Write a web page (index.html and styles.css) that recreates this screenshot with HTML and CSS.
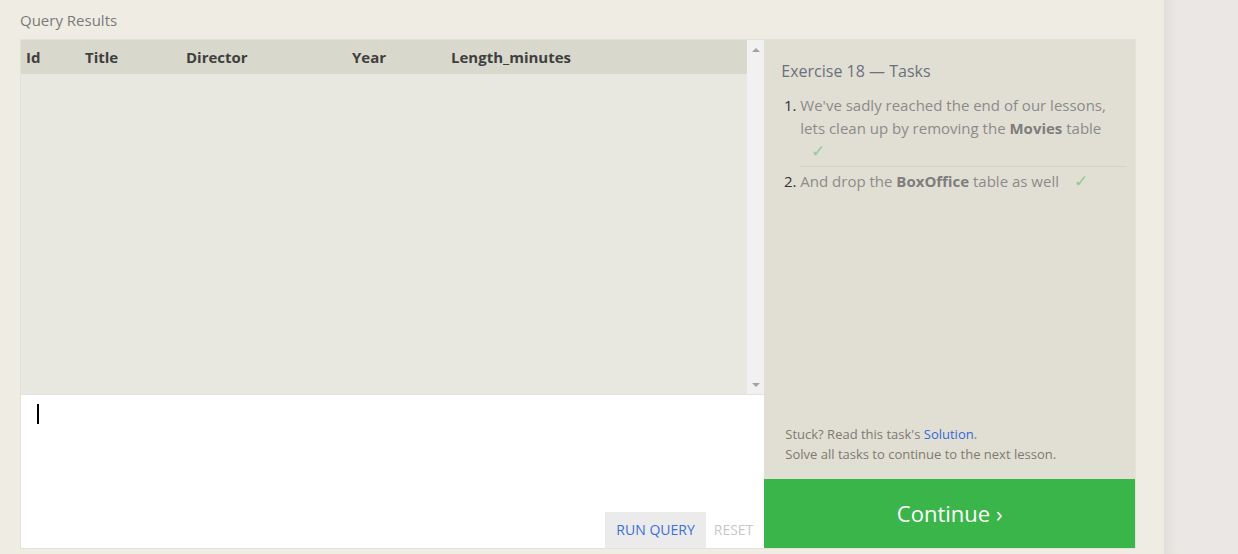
FILE: index.html
```html
<!DOCTYPE html>
<html>
<head>
<meta charset="utf-8">
<link rel="stylesheet" href="styles.css">
</head>
<body>
<div class="page">
  <div class="main">
    <div class="section-title">Query Results</div>
    <div class="box">
      <div class="left">
        <div class="results">
          <div class="table-wrap">
            <table class="grid">
              <thead>
                <tr>
                  <th class="c-id">Id</th>
                  <th class="c-title">Title</th>
                  <th class="c-dir">Director</th>
                  <th class="c-year">Year</th>
                  <th class="c-len">Length_minutes</th>
                </tr>
              </thead>
            </table>
          </div>
          <div class="scrollbar">
            <span class="arrow up"></span>
            <span class="arrow down"></span>
          </div>
        </div>
        <div class="editor">
          <div class="cursor"></div>
          <div class="actions">
            <span class="btn run">RUN QUERY</span>
            <span class="btn reset">RESET</span>
          </div>
        </div>
      </div>
      <div class="right">
        <div class="tasks">
          <div class="tasks-title">Exercise 18 — Tasks</div>
          <ol class="task-list">
            <li>We've sadly reached the end of our lessons, lets clean up by removing the <b>Movies</b> table <span class="check">✓</span></li>
            <li>And drop the <b>BoxOffice</b> table as well <span class="check">✓</span></li>
          </ol>
          <div class="hint">
            <p>Stuck? Read this task's <a class="link">Solution</a>.</p>
            <p>Solve all tasks to continue to the next lesson.</p>
          </div>
        </div>
        <div class="continue">Continue ›</div>
      </div>
    </div>
  </div>
  <div class="side"></div>
</div>
</body>
</html>
```

FILE: styles.css
```css
* { box-sizing: border-box; }
html, body { margin: 0; padding: 0; }
body {
  background: #efece4;
  font-family: "Open Sans", "Noto Sans", sans-serif;
  height: 554px;
  overflow: hidden;
}
.page {
  display: flex;
  height: 554px;
}
.main {
  width: 1164px;
  padding: 0 28px 0 20px;
}
.side {
  flex: 1;
  background: linear-gradient(to right, #e2dfdb 0, #ebe7e4 14px, #ebe7e4 100%);
}
.section-title {
  font-size: 15px;
  line-height: 20px;
  color: #7a7a7a;
  padding-top: 10px;
  height: 39px;
}
.box {
  display: flex;
  border: 1px solid #e3e1d8;
  height: 510px;
}
.left {
  width: 744px;
  display: flex;
  flex-direction: column;
}
.results {
  display: flex;
  height: 355px;
  background: #e8e7e0;
  border-bottom: 1px solid #e4e3dd;
}
.table-wrap {
  flex: 1;
}
.grid {
  border-collapse: collapse;
  width: 100%;
}
.grid th {
  background: #d9d8cc;
  height: 34px;
  text-align: left;
  font-weight: 700;
  font-size: 15px;
  color: #3f3f3f;
  padding: 0 5px;
}
.c-id { width: 59px; }
.c-title { width: 101px; }
.c-dir { width: 166px; }
.c-year { width: 99px; }
.scrollbar {
  width: 17px;
  background: #f1f1f1;
  display: flex;
  flex-direction: column;
  justify-content: space-between;
  align-items: center;
  padding: 8px 0 7px;
}
.arrow {
  width: 0;
  height: 0;
  border-left: 4px solid transparent;
  border-right: 4px solid transparent;
}
.arrow.up { border-bottom: 4px solid #a3a3a3; }
.arrow.down { border-top: 4px solid #a3a3a3; }
.editor {
  flex: 1;
  background: #fff;
  display: flex;
  flex-direction: column;
  justify-content: space-between;
  padding: 9px 0 0 16px;
}
.cursor {
  width: 2px;
  height: 20px;
  background: #000;
}
.actions {
  display: flex;
  justify-content: flex-end;
  align-items: stretch;
}
.btn {
  font-size: 14px;
  line-height: 36px;
  height: 36px;
  padding: 0 11px;
}
.btn.run {
  background: #ebebeb;
  color: #3b6fdc;
}
.btn.reset {
  color: #c8c8c8;
  padding: 0 11px 0 8px;
}
.right {
  width: 371px;
  display: flex;
  flex-direction: column;
  background: #e1dfd3;
}
.tasks {
  flex: 1;
  display: flex;
  flex-direction: column;
  padding: 20px 8px 15px 17px;
}
.tasks-title {
  font-size: 16px;
  line-height: 22px;
  color: #6b707d;
}
.task-list {
  margin: 12px 0 0;
  padding: 0 0 0 19px;
  font-size: 15px;
  line-height: 23px;
  color: #8b8b8b;
}
.task-list li {
  padding: 0 0 3px 0;
}
.task-list li::marker {
  color: #333;
}
.task-list li + li {
  border-top: 1px solid #d5d3c8;
  padding-top: 3px;
}
.task-list b {
  color: #7d7d7d;
}
.check {
  display: inline-block;
  color: #8fcb97;
  font-size: 17px;
  line-height: 18px;
  margin-left: 11px;
}
.hint {
  margin-top: auto;
  font-size: 13px;
  line-height: 20px;
  color: #7d7a72;
  padding-left: 4px;
}
.hint p { margin: 0; }
.link { color: #2f6ad9; }
.continue {
  height: 69px;
  background: #3ab54a;
  color: #fff;
  font-size: 22px;
  display: flex;
  align-items: center;
  justify-content: center;
  padding-bottom: 2px;
}
```
